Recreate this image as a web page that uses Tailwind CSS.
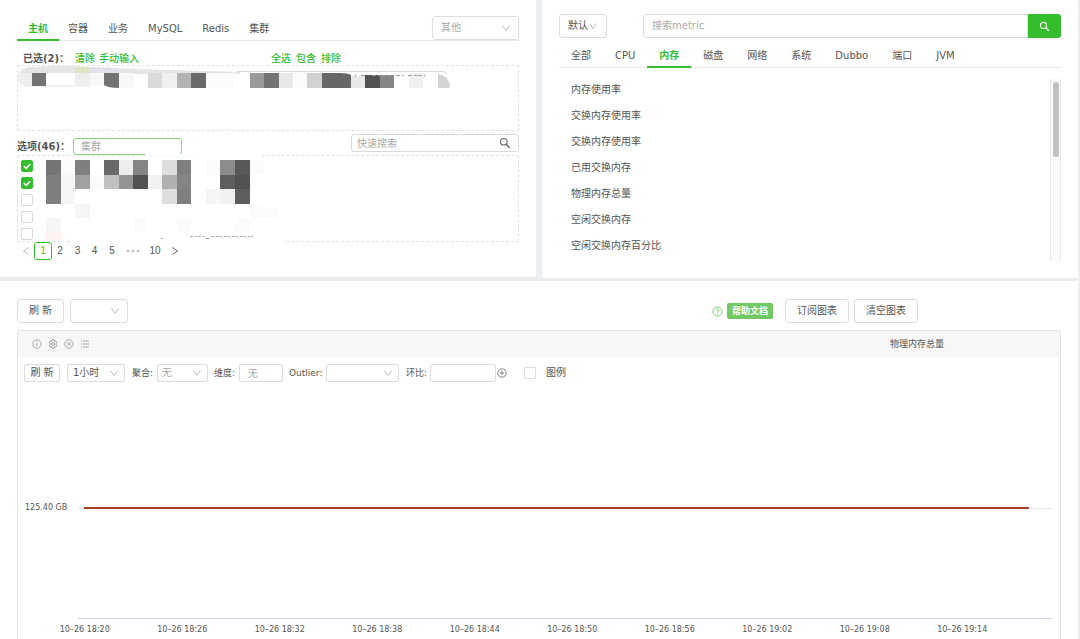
<!DOCTYPE html>
<html lang="zh-CN">
<head>
<meta charset="utf-8">
<meta name="viewport" content="width=device-width, initial-scale=1">
<title>监控图表</title>
<script src="https://cdn.jsdelivr.net/npm/@tailwindcss/browser@4"></script>
</head>
<body class="flex min-h-screen flex-col gap-[3px] overflow-hidden bg-[#ebeff2] pr-[2px] font-['DejaVu_Sans','Noto_Sans_CJK_SC',sans-serif] text-[10px] leading-4 text-[#555]">
<svg class="hidden">
  <symbol id="down" viewBox="0 0 10 10"><path d="M1.5 2.5 5 7.5 8.5 2.5" fill="none" stroke="currentColor" stroke-width="1"/></symbol>
  <symbol id="search" viewBox="0 0 12 12"><circle cx="4.8" cy="4.8" r="3.3" fill="none" stroke="currentColor" stroke-width="1.1"/><path d="M7.2 7.2 10.6 10.6" stroke="currentColor" stroke-width="1.5"/></symbol>
  <symbol id="tick" viewBox="0 0 12 12"><path d="M2.8 6 5.2 8.3 9.3 4" fill="none" stroke="#fff" stroke-width="1.6"/></symbol>
</svg>

<main class="contents">
<div class="grid grid-cols-2 gap-[6px]">
  <section class="mb-px bg-white px-[17px] pt-4">
    <div class="relative border-b border-[#e8e8e8]">
      <nav class="flex">
        <a href="#" class="-mb-px h-[25px] border-b-2 border-[#34bd2c] px-[11px] pt-[5px] font-bold text-[#34bd2c]">主机</a>
        <a href="#" class="-ml-[2px] px-[11px] pt-[5px]">容器</a>
        <a href="#" class="-ml-[2px] px-[11px] pt-[5px]">业务</a>
        <a href="#" class="-ml-[2px] px-[11px] pt-[5px]">MySQL</a>
        <a href="#" class="-ml-[2px] px-[11px] pt-[5px]">Redis</a>
        <a href="#" class="-ml-[2px] px-[11px] pt-[5px]">集群</a>
      </nav>
      <div class="absolute top-0 right-0 h-6 w-[87px]">
        <select aria-label="其他类型" class="h-6 w-full appearance-none rounded-[3px] border border-[#ddd] bg-white pl-2 text-[#aaa]"><option>其他</option></select>
        <svg class="pointer-events-none absolute top-[7px] right-2 size-[10px] text-[#bbb]"><use href="#down"/></svg>
      </div>
    </div>
    <div class="mt-[10px] flex h-[14px] pl-[6px]">
      <span class="w-[52px] font-bold whitespace-nowrap">已选(2)：</span>
      <span class="flex gap-1">
        <button class="font-medium text-[#34bd2c]">清除</button>
        <button class="font-medium text-[#34bd2c]">手动输入</button>
      </span>
      <span class="ml-[132px] flex gap-[5px]">
        <button class="font-medium text-[#34bd2c]">全选</button>
        <button class="font-medium text-[#34bd2c]">包含</button>
        <button class="font-medium text-[#34bd2c]">排除</button>
      </span>
    </div>
    <div class="h-[66px] border border-dashed border-[#e4e4e4]">
      <svg width="440" height="26" viewBox="18 66 440 26" class="block" aria-hidden="true">
        <path d="M30 72.500H230M237 74v-2.500h207q2 0 2 3" fill="none" stroke="#d9d9d9"/>
        <path d="M18 78Q19 68 30 67Q60 65 90 67L134 69 240 72V74H18Z" fill="#e5e5e5"/>
        <path d="M75 67h15v6H75z" fill="#e0e5c4"/><path d="M90 67 119 68v5H90z" fill="#e5dfe8"/>
        <path d="M32 86h58" stroke="#e5e5e5"/>
        <path d="M18 78v3q2 6 14 6V73H18z" fill="#eee"/>
        <g shape-rendering="crispEdges">
        <path fill="#fff" d="M47 73h28v12H47z"/><path fill="#737373" d="M32 73h14v13H32zM264 73h15v15h-15z"/><path fill="#eee" d="M75 73h15v12H75z"/><path fill="#f7f7f7" d="M90 73h14v12H90zM119 73h14v15h-14z"/>
        <path fill="#dadada" d="M148 73h14v15h-14z"/><path fill="#f0f0f0" d="M162 73h15v15h-15zM409 73h14v15h-14z"/><path fill="#b4b4b4" d="M177 73h14v15h-14z"/><path fill="#6a6a6a" d="M191 73h15v15h-15z"/>
        <path fill="#fbfbfb" d="M206 73h29v15h-29zM293 73h14v15h-14z"/><path fill="#9a9a9a" d="M250 73h14v15h-14z"/><path fill="#e8e8e8" d="M279 73h14v15h-14zM351 76h14v12h-14z"/><path fill="#d1d1d1" d="M307 73h15v15h-15z"/>
        <path fill="#525252" d="M365 75h15v13h-15z"/><path fill="#868686" d="M380 75h14v13h-14z"/></g>
        <path fill="#737373" d="M104 73h15v15q-11 0-15-3z"/><path fill="#676767" d="M322 73h18q8 0 11 2v13h-29z"/><path fill="#d3d3d3" d="M438 74q12 2 12 14h-12z"/>
        <path d="M356 74.500l-1 2M361 75.500h4M372 75.500h20M396 75.500h8M408 75.500h16M424 74.500l1 2" stroke="#999" stroke-dasharray="4 2 3 1" fill="none"/>
      </svg>
    </div>
    <div class="flex h-6 items-start">
      <label for="cluster" class="mt-[8px] w-14 font-bold whitespace-nowrap">选项(46)：</label>
      <input id="cluster" placeholder="集群" class="mt-[7px] h-[17px] w-[109px] rounded-[3px] border border-[#8bd67f] px-[7px] placeholder:text-[#aaa]">
      <div class="relative mt-[3px] ml-auto w-[168px]">
        <input aria-label="快速搜索" placeholder="快速搜索" class="block h-[18px] w-full rounded-[3px] border border-[#d9d9d9] px-[5px] placeholder:text-[#aaa]">
        <svg class="absolute top-[3px] right-2 size-3 text-[#666]"><use href="#search"/></svg>
      </div>
    </div>
    <div class="relative h-[87px] border border-dashed border-[#e4e4e4] pt-[4px] pl-[3px]">
      <div class="flex flex-col gap-[5px]">
        <label class="relative size-3"><input type="checkbox" checked aria-label="选项 1" class="block size-3 appearance-none rounded-[2px] border border-[#d9d9d9] bg-white checked:border-[#34bd2c] checked:bg-[#34bd2c]"><svg class="absolute top-0 left-0 size-3"><use href="#tick"/></svg></label>
        <label class="relative size-3"><input type="checkbox" checked aria-label="选项 2" class="block size-3 appearance-none rounded-[2px] border border-[#d9d9d9] bg-white checked:border-[#34bd2c] checked:bg-[#34bd2c]"><svg class="absolute top-0 left-0 size-3"><use href="#tick"/></svg></label>
        <input type="checkbox" aria-label="选项 3" class="block size-3 appearance-none rounded-[2px] border border-[#d9d9d9] bg-white">
        <input type="checkbox" aria-label="选项 4" class="block size-3 appearance-none rounded-[2px] border border-[#d9d9d9] bg-white">
        <input type="checkbox" aria-label="选项 5" class="block size-3 appearance-none rounded-[2px] border border-[#d9d9d9] bg-white">
      </div>
      <svg width="250" height="90" viewBox="40 154 250 90" class="absolute -top-[2px] left-[22px]" aria-hidden="true" shape-rendering="crispEdges">
        <path fill="#fff" d="M145 154h117v4H145zM70 240h214v4H70z"/><path fill="#f8fbff" d="M145 155h45v3h-45z"/>
        <path fill="#757575" d="M46 160h15v15H46z"/><path fill="#7f7f7f" d="M75 160h15v15H75zM177 160h14v15h-14zM46 175h15v29H46zM177 189h14v15h-14z"/><path fill="#696969" d="M104 160h15v15h-15z"/><path fill="#ededed" d="M119 160h14v15h-14z"/><path fill="#858585" d="M133 160h15v15h-15zM177 175h14v14h-14z"/><path fill="#dedede" d="M162 160h15v15h-15zM162 189h15v15h-15z"/><path fill="#8c8c8c" d="M220 160h15v15h-15z"/><path fill="#585858" d="M235 160h15v15h-15z"/>
        <path fill="#fbfbfb" d="M61 160h14v15H61zM206 160h14v15h-14zM250 160h14v14h-14zM90 175h14v14H90zM250 204h14v14h-14zM264 208h14v10h-14zM133 218h15v14h-15zM177 218h14v14h-14zM235 218h15v14h-15z"/>
        <path fill="#f6f6f6" d="M61 175h14v29H61zM206 189h14v15h-14zM75 204h15v14H75zM46 218h15v15H46z"/><path fill="#a1a1a1" d="M75 175h15v14H75z"/><path fill="#c0c0c0" d="M104 175h15v14h-15z"/><path fill="#949494" d="M119 175h14v14h-14z"/><path fill="#525252" d="M133 175h15v14h-15zM235 175h15v14h-15z"/><path fill="#f2f2f2" d="M148 175h14v14h-14zM220 189h15v15h-15z"/><path fill="#b0b0b0" d="M162 175h15v14h-15z"/><path fill="#5e5e5e" d="M220 175h15v14h-15zM235 189h15v15h-15z"/><path fill="#fff2f2" d="M46 233h15v8H46z"/>
        <path d="M161 238.500h2M206 238.500h3" stroke="#999" fill="none"/><path d="M190 236.500h14M211 236.500h42" stroke="#aaa" stroke-dasharray="3 2 2 1" fill="none"/>
      </svg>
    </div>
    <nav class="flex h-[35px] items-start font-['Liberation_Sans',sans-serif] leading-[18px]" aria-label="分页">
      <button aria-label="上一页" class="grid h-[18px] w-[17px] place-items-center text-[#bbb]"><svg class="size-[10px] rotate-90"><use href="#down"/></svg></button>
      <button class="h-[18px] w-[18px] rounded-[3px] border border-[#34bd2c] leading-4 text-[#34bd2c]">1</button>
      <button class="w-4">2</button><button class="w-[18px] pl-px">3</button><button class="w-[17px]">4</button><button class="w-[18px]">5</button>
      <button aria-label="更多页" class="grid h-[18px] w-[23px] place-items-center text-[#bbb]"><svg width="14" height="4" fill="currentColor"><circle cx="2" cy="2" r="1.300"/><circle cx="7" cy="2" r="1.300"/><circle cx="12" cy="2" r="1.300"/></svg></button>
      <button class="w-[22px]">10</button>
      <button aria-label="下一页" class="grid h-[18px] w-[17px] place-items-center text-[#666]"><svg class="size-[10px] -rotate-90"><use href="#down"/></svg></button>
    </nav>
  </section>

  <section class="bg-white px-[17px] pt-[14px]">
    <div class="flex h-6">
      <div class="relative w-12">
        <select aria-label="默认" class="h-6 w-full appearance-none rounded-[3px] border border-[#ddd] bg-white pl-2"><option>默认</option></select>
        <svg class="pointer-events-none absolute top-[7px] right-[9px] size-[10px] text-[#bbb]"><use href="#down"/></svg>
      </div>
      <input aria-label="搜索metric" placeholder="搜索metric" class="ml-9 min-w-0 flex-1 rounded-l-[3px] border border-[#ddd] px-2 placeholder:text-[#aaa]">
      <button aria-label="搜索" class="grid w-[33px] place-items-center rounded-r-[3px] bg-[#34bd2c] text-white"><svg class="size-[11px]"><use href="#search"/></svg></button>
    </div>
    <nav class="mt-[10px] flex h-5 border-b border-[#e8e8e8]">
      <a href="#" class="px-3">全部</a>
      <a href="#" class="px-3">CPU</a>
      <a href="#" class="h-5 border-b-2 border-[#34bd2c] px-3 font-bold text-[#34bd2c]">内存</a>
      <a href="#" class="px-3">磁盘</a>
      <a href="#" class="px-3">网络</a>
      <a href="#" class="px-3">系统</a>
      <a href="#" class="px-3">Dubbo</a>
      <a href="#" class="px-3">端口</a>
      <a href="#" class="px-3">JVM</a>
    </nav>
    <div class="mt-[11px] flex h-[182px] justify-between">
      <ul class="-mt-[2px] pl-3 leading-[26px]">
        <li>内存使用率</li><li>交换内存使用率</li><li>交换内存使用率</li><li>已用交换内存</li><li>物理内存总量</li><li>空闲交换内存</li><li>空闲交换内存百分比</li>
      </ul>
      <div class="w-[11px] border-x border-[#e8e8e8] bg-[#fafafa] px-[2px] pt-[3px]"><div class="h-[75px] w-[6px] rounded-full bg-[#c1c1c1]"></div></div>
    </div>
  </section>
</div>

<section class="flex flex-1 flex-col bg-white px-[17px] pt-[18px]">
  <div class="flex h-6 items-center">
    <button class="h-6 w-[47px] rounded-[3px] border border-[#ddd]">刷 新</button>
    <div class="relative ml-[6px] w-[58px]">
      <select aria-label="刷新间隔" class="block h-6 w-full appearance-none rounded-[3px] border border-[#ddd] bg-white"><option></option></select>
      <svg class="pointer-events-none absolute top-[7px] right-2 size-[10px] text-[#bbb]"><use href="#down"/></svg>
    </div>
    <svg class="ml-[584px] size-[11px] text-[#6fca62]" viewBox="0 0 12 12" fill="none" stroke="currentColor"><circle cx="6" cy="6" r="5"/><path d="M4.300 5q0-1.700 1.700-1.700T7.700 4.800Q7.700 5.700 6 6.200V7.200M6 8v1"/></svg>
    <a href="#" class="ml-1 h-4 w-[46px] rounded-[2px] bg-[#72c964] text-center text-[9px] font-bold whitespace-nowrap text-white">帮助文档</a>
    <button class="ml-3 h-6 w-16 rounded-[3px] border border-[#ddd]">订阅图表</button>
    <button class="ml-[5px] h-6 w-16 rounded-[3px] border border-[#ddd]">清空图表</button>
  </div>
  <article class="mt-[7px] flex flex-1 flex-col rounded-t-[3px] border border-b-0 border-[#e4e4e4]">
    <header class="flex h-[26px] items-center bg-[#f7f7f7] pl-[14px]">
      <div class="flex gap-[6px] text-[#999]">
        <button aria-label="信息"><svg class="block size-[10px]" viewBox="0 0 10 10" fill="none" stroke="currentColor" stroke-width=".8"><circle cx="5" cy="5" r="4.200"/><path d="M5 4.300v3M5 2.500v.9"/></svg></button>
        <button aria-label="设置"><svg class="block size-[10px]" viewBox="0 0 10 10" fill="none" stroke="currentColor" stroke-width=".9"><path d="M4 .8h2l.4 1.300 1.300-.3 1.100 1.700-.8 1 .0 1 .8 1-1.100 1.700-1.300-.3L6 9.200H4l-.4-1.300-1.300.3L1.200 6.500l.8-1v-1l-.8-1 1.100-1.700 1.300.3z"/><circle cx="5" cy="5" r="1.600"/></svg></button>
        <button aria-label="关闭"><svg class="block size-[10px]" viewBox="0 0 10 10" fill="none" stroke="currentColor" stroke-width=".8"><circle cx="5" cy="5" r="4.200"/><path d="M3.500 3.200 6.500 6.800M6.500 3.200 3.500 6.800"/></svg></button>
        <button aria-label="列表"><svg class="block size-[10px]" viewBox="0 0 10 10" fill="none" stroke="currentColor" stroke-width=".9"><path d="M3 2h6M3 5h6M3 8h6M1 2h1M1 5h1M1 8h1"/></svg></button>
      </div>
      <h2 class="mr-[116px] ml-auto text-[9px]">物理内存总量</h2>
    </header>
    <div class="mt-[7px] flex h-[18px] items-center pl-[6px] text-[9px] whitespace-nowrap">
      <button class="h-[18px] w-9 rounded-[2px] border border-[#ddd] text-[10px] leading-[14px]">刷 新</button>
      <div class="relative ml-[7px] w-[58px]">
        <select aria-label="时间范围" class="block h-[18px] w-full appearance-none rounded-[2px] border border-[#ddd] bg-white pl-[5px] text-[10px]"><option>1小时</option></select>
        <svg class="pointer-events-none absolute top-1 right-[6px] size-[10px] text-[#bbb]"><use href="#down"/></svg>
      </div>
      <label for="agg" class="ml-[7px] w-[25px]">聚合:</label>
      <div class="relative w-[51px]">
        <select id="agg" class="block h-[18px] w-full appearance-none rounded-[2px] border border-[#ddd] bg-white pl-1 text-[10px] text-[#aaa]"><option>无</option></select>
        <svg class="pointer-events-none absolute top-1 right-[6px] size-[10px] text-[#bbb]"><use href="#down"/></svg>
      </div>
      <label for="dim" class="ml-[6px] w-[25px]">维度:</label>
      <input id="dim" placeholder="无" class="h-[18px] w-11 rounded-[2px] border border-[#ddd] px-2 text-[10px] placeholder:text-[#aaa]">
      <label for="outlier" class="ml-[6px] w-[37px]">Outlier:</label>
      <div class="relative w-[73px]">
        <select id="outlier" class="block h-[18px] w-full appearance-none rounded-[2px] border border-[#ddd] bg-white"><option></option></select>
        <svg class="pointer-events-none absolute top-1 right-[6px] size-[10px] text-[#bbb]"><use href="#down"/></svg>
      </div>
      <label for="ratio" class="ml-[7px] w-6">环比:</label>
      <input id="ratio" class="h-[18px] w-[66px] rounded-[2px] border border-[#ddd]">
      <button aria-label="添加环比" class="ml-px text-[#777]"><svg class="block size-[10px]" viewBox="0 0 10 10" fill="none" stroke="currentColor" stroke-width=".9"><circle cx="5" cy="5" r="4.200"/><path d="M5 2.700v4.600M2.700 5h4.600"/></svg></button>
      <input id="legend" type="checkbox" class="ml-[17px] size-3 appearance-none rounded-[1px] border border-[#ddd]">
      <label for="legend" class="ml-[10px] text-[10px]">图例</label>
    </div>
    <div class="flex flex-1 flex-col pt-[118px] text-[8px]">
      <div class="flex h-4 items-center pr-2 pl-[7px]">
        <span class="w-[53px] whitespace-nowrap">125.40 GB</span>
        <span class="h-px w-[6px] bg-[#e6e6e6]"></span>
        <span class="h-[2px] flex-1 bg-[#a83c26]"></span>
        <span class="h-px w-[23px] bg-[#e6e6e6]"></span>
      </div>
      <div class="mr-2 ml-[60px] h-[103px] border-b border-[#ccd6eb]"></div>
      <div class="mt-[3px] mr-[49px] ml-[18px] grid grid-cols-10 text-center whitespace-nowrap">
        <span>10–26 18:20</span><span>10–26 18:26</span><span>10–26 18:32</span><span>10–26 18:38</span><span>10–26 18:44</span><span>10–26 18:50</span><span>10–26 18:56</span><span>10–26 19:02</span><span>10–26 19:08</span><span>10–26 19:14</span>
      </div>
    </div>
  </article>
</section>
</main>
</body>
</html>
